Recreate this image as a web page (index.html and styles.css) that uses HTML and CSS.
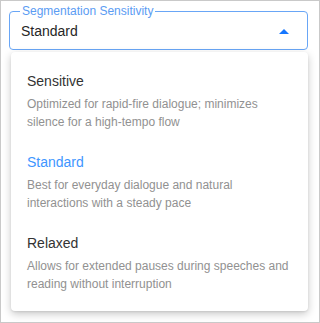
FILE: index.html
```html
<!DOCTYPE html>
<html lang="en">
<head>
  <meta charset="UTF-8">
  <title>Segmentation Sensitivity</title>
  <link rel="stylesheet" href="styles.css">
</head>
<body>
  <div class="frame">
    <fieldset class="select-field">
      <legend>Segmentation Sensitivity</legend>
      <div class="select-value">
        <span>Standard</span>
        <svg class="caret" width="10" height="5" viewBox="0 0 10 5">
          <polygon points="0,5 5,0 10,5" fill="#1677ff"/>
        </svg>
      </div>
    </fieldset>

    <ul class="menu">
      <li class="option">
        <div class="option-title">Sensitive</div>
        <div class="option-desc">Optimized for rapid-fire dialogue; minimizes silence for a high-tempo flow</div>
      </li>
      <li class="option selected">
        <div class="option-title">Standard</div>
        <div class="option-desc">Best for everyday dialogue and natural interactions with a steady pace</div>
      </li>
      <li class="option">
        <div class="option-title">Relaxed</div>
        <div class="option-desc">Allows for extended pauses during speeches and reading without interruption</div>
      </li>
    </ul>
  </div>
</body>
</html>
```

FILE: styles.css
```css
body {
  margin: 0;
  font-family: "Liberation Sans", Arial, sans-serif;
  background: #fff;
}

.frame {
  width: 320px;
  height: 323px;
  box-sizing: border-box;
  border: 1px solid #c9c9c9;
  padding: 3px 11px 0 8px;
  overflow: hidden;
}

/* outlined select */
.select-field {
  margin: 0;
  min-inline-size: 0;
  border: 1px solid #69a6f6;
  border-radius: 4px;
  padding: 3px 18px 8px 11px;
}

.select-field legend {
  font-size: 12px;
  line-height: 14px;
  color: #5b9cf3;
  padding: 0 2px;
  margin-left: -1px;
}

.select-value {
  display: flex;
  align-items: center;
  justify-content: space-between;
  font-size: 14px;
  line-height: 20px;
  color: #262626;
}

.caret {
  display: block;
}

/* dropdown list */
.menu {
  list-style: none;
  margin: 2px 0 0 2px;
  padding: 8px 0;
  background: #fff;
  border-radius: 4px;
  box-shadow: 0 3px 8px rgba(0, 0, 0, 0.22), 0 1px 2px rgba(0, 0, 0, 0.08);
}

.option {
  padding: 10px 16px;
}

.option-title {
  font-size: 14px;
  line-height: 22px;
  color: #333;
  margin-bottom: 3px;
}

.option-desc {
  font-size: 12px;
  line-height: 18px;
  color: #919191;
}

.option.selected .option-title {
  color: #4096ff;
}
```
